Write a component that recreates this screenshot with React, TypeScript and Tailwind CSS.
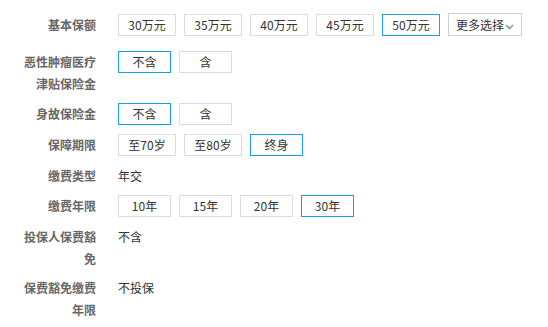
import React, { useState } from 'react';

const font = { fontFamily: '"Noto Sans CJK SC", "Liberation Sans", sans-serif' };

type Opt = { label: string; w: string };

const Options = ({ items, initial }: { items: Opt[]; initial: number }) => {
  const [sel, setSel] = useState(initial);
  return (
    <div className="flex gap-[8px]">
      {items.map((it, i) => (
        <button
          key={it.label}
          onClick={() => setSel(i)}
          className={`${it.w} h-[22px] flex items-center justify-center text-[12px] leading-none text-[#333] bg-white border ${
            sel === i ? 'border-[#1aa0e6]' : 'border-[#dcdcdc]'
          }`}
        >
          {it.label}
        </button>
      ))}
    </div>
  );
};

const Row = ({ label, className = '', children }: { label: React.ReactNode; className?: string; children: React.ReactNode }) => (
  <div className={`flex ${className}`}>
    <div className="w-[96px] pl-[24px] pr-0 text-right text-[12px] leading-[22px] font-bold text-[#666] shrink-0">{label}</div>
    <div className="ml-[22px] text-[12px] leading-[22px] text-[#333]">{children}</div>
  </div>
);

const w58 = 'w-[58px]';
const w53 = 'w-[53px]';

export default function App() {
  return (
    <div className="w-[548px] h-[327px] bg-white pt-[14px]" style={font}>
      <Row label="基本保额">
        <div className="flex gap-[8px] items-center">
          <Options
            initial={4}
            items={[
              { label: '30万元', w: w58 },
              { label: '35万元', w: w58 },
              { label: '40万元', w: w58 },
              { label: '45万元', w: w58 },
              { label: '50万元', w: w58 },
            ]}
          />
          <button className="w-[74px] h-[23px] -mt-[1px] flex items-center pl-[7px] text-[12px] leading-none text-[#333] bg-white border border-[#cfcfcf]">
            更多选择
            <svg width="9" height="6" viewBox="0 0 9 6" className="ml-[1px] mt-[4px]">
              <path d="M1 1l3.5 3.5L8 1" fill="none" stroke="#999" strokeWidth="1.6" />
            </svg>
          </button>
        </div>
      </Row>

      <Row label={<>恶性肿瘤医疗<br />津贴保险金</>} className="mt-[15px]">
        <Options initial={0} items={[{ label: '不含', w: w53 }, { label: '含', w: w53 }]} />
      </Row>

      <Row label="身故保险金" className="mt-[8px]">
        <Options initial={0} items={[{ label: '不含', w: w53 }, { label: '含', w: w53 }]} />
      </Row>

      <Row label="保障期限" className="mt-[9px]">
        <Options
          initial={2}
          items={[
            { label: '至70岁', w: w58 },
            { label: '至80岁', w: w58 },
            { label: '终身', w: 'w-[53px]' },
          ]}
        />
      </Row>

      <Row label="缴费类型" className="mt-[9px]">
        年交
      </Row>

      <Row label="缴费年限" className="mt-[8px]">
        <Options
          initial={3}
          items={[
            { label: '10年', w: w53 },
            { label: '15年', w: w53 },
            { label: '20年', w: w53 },
            { label: '30年', w: w53 },
          ]}
        />
      </Row>

      <Row label={<>投保人保费豁<br />免</>} className="mt-[9px]">
        不含
      </Row>

      <Row label={<>保费豁免缴费<br />年限</>} className="mt-[7px]">
        不投保
      </Row>
    </div>
  );
}
